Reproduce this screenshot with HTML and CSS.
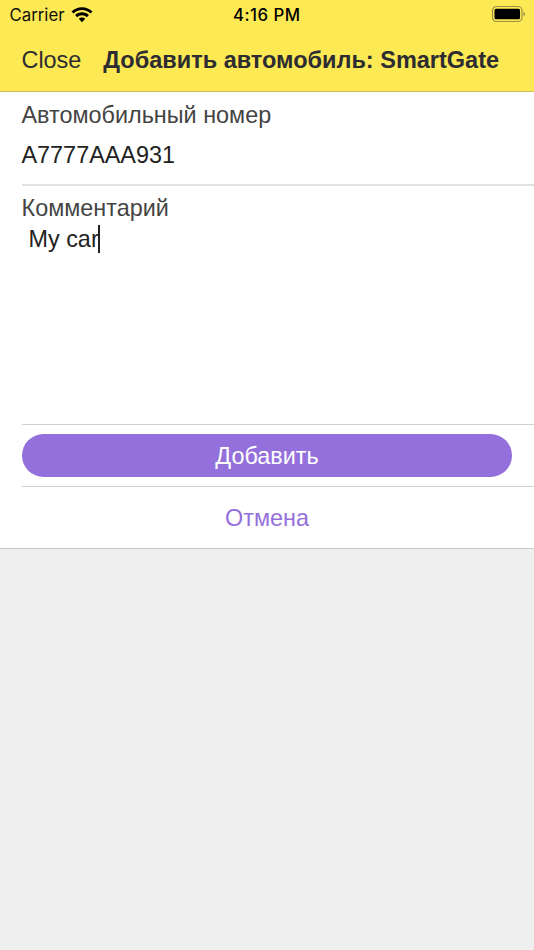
FILE: index.html
```html
<!DOCTYPE html>
<html lang="ru">
<head>
<meta charset="utf-8">
<title>SmartGate</title>
<link rel="stylesheet" href="styles.css">
</head>
<body>
<header class="top">
  <div class="status">
    <div class="carrier"><span>Carrier</span>
      <svg class="wifi" viewBox="0 0 22 16" width="22" height="16"><path d="M11 .3C6.900 .3 3.200 1.900.5 4.500L2.500 6.600C4.700 4.400 7.700 3.100 11 3.100s6.300 1.300 8.500 3.500l2-2.100C18.800 1.900 15.100.3 11 .3z"/><path d="M11 5.300c-2.700 0-5.100 1-6.900 2.800l2.100 2.200c1.200-1.300 2.900-2.100 4.800-2.100s3.600.8 4.800 2.100l2.100-2.200C16.100 6.300 13.700 5.300 11 5.300z"/><path d="M11 10.500c-1.300 0-2.300.5-3.200 1.300L11 15.200l3.200-3.400c-.9-.8-1.900-1.300-3.200-1.300z"/></svg>
    </div>
    <time class="clock">4:16 PM</time>
    <svg class="battery" viewBox="0 0 35 18" width="35" height="18"><rect class="case" x="1.500" y="1.500" width="29.500" height="15" rx="4"/><rect x="3.500" y="3.700" width="25.500" height="10.600" rx="1.500"/><path class="tip" d="M32.500 6.700c1.100.4 1.500 1.300 1.500 2.300s-.4 1.900-1.500 2.300z"/></svg>
  </div>
  <nav class="nav"><span class="close">Close</span><h1>Добавить автомобиль: SmartGate</h1></nav>
</header>
<main class="form">
  <section class="row number"><label>Автомобильный номер</label><div class="value">A7777AAA931</div></section>
  <section class="row comment"><label>Комментарий</label><div class="text">My car<span class="caret"></span></div></section>
  <section class="row submit"><button class="primary">Добавить</button></section>
  <section class="row cancel"><button class="link">Отмена</button></section>
</main>
</body>
</html>
```
FILE: styles.css
```css
* { box-sizing: border-box; }
body { margin: 0; min-height: 950px; background: #efefef; color: #222; font: 23.4px/28px "Liberation Sans", Arial, sans-serif; }
.top { height: 92px; background: #fce953; border-bottom: 1px solid #cbbf5c; }
.status { height: 30px; display: grid; grid-template-columns: 1fr auto 1fr; align-items: center; padding: 0 8px 0 9.5px; font: 16.8px/30px Inter, sans-serif; color: #111; }
.carrier { display: flex; align-items: center; gap: 6px; }
.clock { margin-left: -2px; font-weight: 500; letter-spacing: .5px; color: #000; }
.battery { justify-self: end; margin-top: -2px; }
.case { fill: none; stroke: #9b914a; stroke-width: 1.2; }
.tip { fill: #9b914a; }
.nav { height: 60px; display: flex; align-items: center; padding-left: 21.5px; gap: 22px; white-space: nowrap; color: #2c2c32; }
h1 { margin: 0; font-size: 23.5px; line-height: 28px; }
.form { background: #fff; padding-left: 22px; border-bottom: 1px solid #c8c8c8; }
.row { border-bottom: 1px solid #d0d0d0; }
.row:last-child { border: 0; }
label { display: block; margin-left: -.5px; color: #444; }
.number { height: 94px; padding-top: 9px; border-bottom: 2px solid #e2e2e2; }
.value { margin: 12px 0 0 -.5px; }
.comment { height: 239px; padding-top: 8px; }
.text { display: flex; padding-left: 6.5px; margin-top: 3px; }
.caret { width: 2.5px; height: 28px; margin-left: -1px; background: #222; }
.submit { height: 62px; padding: 9px 22px 0 0; }
button { display: block; width: 100%; border: 0; padding: 0; font: inherit; }
.primary { height: 43px; border-radius: 22px; background: #9370db; color: #fff; }
.cancel { height: 61px; padding-right: 22px; }
.link { height: 61px; background: none; color: #9370db; }
```
